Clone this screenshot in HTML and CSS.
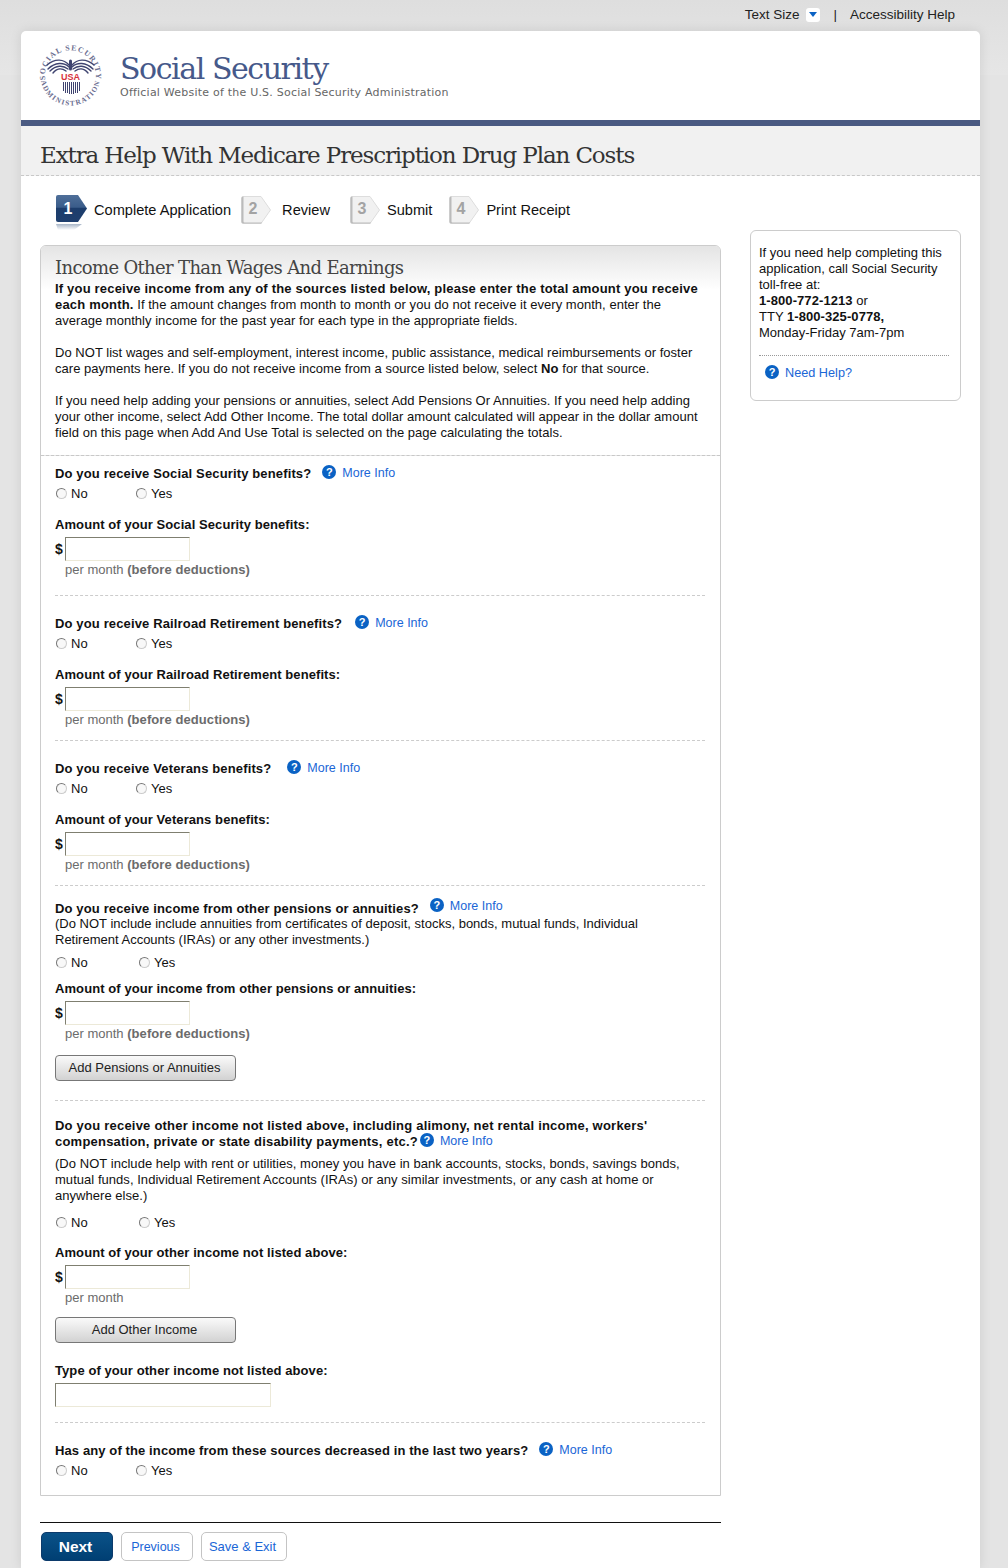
FILE: index.html
```html
<!DOCTYPE html>
<html lang="en">
<head>
  <meta charset="UTF-8" />
  <title>Extra Help With Medicare Prescription Drug Plan Costs</title>
  <link rel="stylesheet" href="styles.css">
</head>
<body>
  <div class="top-links">
    <span>Text Size</span>
    <span class="size-toggle"><svg width="8" height="5" viewBox="0 0 8 5"><path d="M0 0h8L4 5z" fill="#0a62c4"/></svg></span>
    <span class="divider">|</span>
    <span>Accessibility Help</span>
  </div>

  <div class="container">
    <div class="masthead">
      <svg class="seal" width="64" height="64" viewBox="0 0 64 64">
        <defs>
          <path id="arc-top" d="M6.500 37A25.500 25.500 0 1 1 56.500 37"/>
          <path id="arc-bottom" d="M1.600 34A30 30 0 0 0 61.400 34"/>
        </defs>
        <text class="seal-text"><textPath href="#arc-top" textLength="87" lengthAdjust="spacing" startOffset="1">SOCIAL SECURITY</textPath></text>
        <text class="seal-text seal-text-low"><textPath href="#arc-bottom" textLength="82" lengthAdjust="spacing" startOffset="3">ADMINISTRATION</textPath></text>
        <g fill="none" stroke="#3f4470" stroke-width="1.400" stroke-linecap="round">
          <path d="M30 21C25 15 16 14 8 21"/>
          <path d="M30 23C25 18 16 18 9 25"/>
          <path d="M29 25C24 21 17 21 11 27"/>
          <path d="M27 27C23 24 18 24 14 29"/>
          <path d="M33 21C38 15 47 14 55 21"/>
          <path d="M33 23C38 18 47 18 54 25"/>
          <path d="M34 25C39 21 46 21 52 27"/>
          <path d="M36 27C40 24 45 24 49 29"/>
          <path d="M31.500 17v8" stroke-width="3"/>
        </g>
        <text class="seal-usa" x="31.500" y="35.500" text-anchor="middle">USA</text>
        <path d="M24.500 38v9M26.500 38v11M28.500 38v11M30.500 38v12M32.500 38v12M34.500 38v12M36.500 38v11M38.500 38v11M40.500 38v9" stroke="#3f4470" stroke-width="1"/>
      </svg>
      <div class="brand">
        <div class="brand-name">Social Security</div>
        <div class="brand-sub">Official Website of the U.S. Social Security Administration</div>
      </div>
    </div>

    <div class="page-title"><h1>Extra Help With Medicare Prescription Drug Plan Costs</h1></div>

    <div class="columns">
      <div class="main-col">
        <div class="steps">
          <div class="step step-current">
            <span class="step-mark">
              <svg width="33" height="36" viewBox="0 0 33 36">
                <defs>
                  <linearGradient id="step-blue" x1="0" y1="0" x2="0" y2="1"><stop offset="0" stop-color="#4f6f99"/><stop offset=".45" stop-color="#3a5c8a"/><stop offset=".5" stop-color="#1c3d6c"/><stop offset="1" stop-color="#1f3f6e"/></linearGradient>
                  <linearGradient id="step-fade" x1="0" y1="0" x2="0" y2="1"><stop offset="0" stop-color="#a8b6c8"/><stop offset="1" stop-color="#fff"/></linearGradient>
                </defs>
                <path d="M0 29h26l-8 6H2z" fill="url(#step-fade)"/>
                <path d="M2 0h20l9 13.500L22 27H2q-2 0-2-2V2q0-2 2-2z" fill="url(#step-blue)"/>
                <text class="step-num step-num-on" x="12" y="19" text-anchor="middle">1</text>
              </svg>
            </span>
            <span class="step-label">Complete Application</span>
          </div>
          <div class="step step-review">
            <span class="step-mark step-mark-off"><svg width="31" height="28" viewBox="0 0 31 28"><path d="M2 .5h18L29.500 14 20 27.500H2q-1.500 0-1.500-1.500V2Q.5.5 2 .5z" fill="#f1f1f1" stroke="#ddd"/><path d="M2.500.5Q.5.5.5 2.500v23q0 2 2 2h18l.6-1H3.500q-1 0-1-1V.5z" fill="#bbb"/><text class="step-num" x="12" y="18" text-anchor="middle">2</text></svg></span>
            <span class="step-label">Review</span>
          </div>
          <div class="step step-submit">
            <span class="step-mark step-mark-off"><svg width="31" height="28" viewBox="0 0 31 28"><path d="M2 .5h18L29.500 14 20 27.500H2q-1.500 0-1.500-1.500V2Q.5.5 2 .5z" fill="#f1f1f1" stroke="#ddd"/><path d="M2.500.5Q.5.5.5 2.500v23q0 2 2 2h18l.6-1H3.500q-1 0-1-1V.5z" fill="#bbb"/><text class="step-num" x="12" y="18" text-anchor="middle">3</text></svg></span>
            <span class="step-label">Submit</span>
          </div>
          <div class="step step-print">
            <span class="step-mark step-mark-off"><svg width="31" height="28" viewBox="0 0 31 28"><path d="M2 .5h18L29.500 14 20 27.500H2q-1.500 0-1.500-1.500V2Q.5.5 2 .5z" fill="#f1f1f1" stroke="#ddd"/><path d="M2.500.5Q.5.5.5 2.500v23q0 2 2 2h18l.6-1H3.500q-1 0-1-1V.5z" fill="#bbb"/><text class="step-num" x="12" y="18" text-anchor="middle">4</text></svg></span>
            <span class="step-label">Print Receipt</span>
          </div>
        </div>

        <div class="panel">
          <div class="panel-head">
            <h2>Income Other Than Wages And Earnings</h2>
            <p><b>If you receive income from any of the sources listed below, please enter the total amount you receive each month.</b> If the amount changes from month to month or you do not receive it every month, enter the average monthly income for the past year for each type in the appropriate fields.</p>
            <p>Do NOT list wages and self-employment, interest income, public assistance, medical reimbursements or foster care payments here. If you do not receive income from a source listed below, select <b>No</b> for that source.</p>
            <p>If you need help adding your pensions or annuities, select Add Pensions Or Annuities. If you need help adding your other income, select Add Other Income. The total dollar amount calculated will appear in the dollar amount field on this page when Add And Use Total is selected on the page calculating the totals.</p>
          </div>

          <div class="panel-body">
            <div class="section sec-social">
              <div class="question"><b>Do you receive Social Security benefits?</b><a class="more-info"><span class="help-icon">?</span>More Info</a></div>
              <div class="radios"><label><input type="radio" name="q1">No</label><label><input type="radio" name="q1">Yes</label></div>
              <div class="amount-label">Amount of your Social Security benefits:</div>
              <div class="amount-row"><b>$</b><input type="text" class="money"></div>
              <div class="per-month">per month <b>(before deductions)</b></div>
            </div>

            <div class="section sec-railroad">
              <div class="question"><b>Do you receive Railroad Retirement benefits?</b><a class="more-info"><span class="help-icon">?</span>More Info</a></div>
              <div class="radios"><label><input type="radio" name="q2">No</label><label><input type="radio" name="q2">Yes</label></div>
              <div class="amount-label">Amount of your Railroad Retirement benefits:</div>
              <div class="amount-row"><b>$</b><input type="text" class="money"></div>
              <div class="per-month">per month <b>(before deductions)</b></div>
            </div>

            <div class="section sec-veterans">
              <div class="question"><b>Do you receive Veterans benefits?</b><a class="more-info"><span class="help-icon">?</span>More Info</a></div>
              <div class="radios"><label><input type="radio" name="q3">No</label><label><input type="radio" name="q3">Yes</label></div>
              <div class="amount-label">Amount of your Veterans benefits:</div>
              <div class="amount-row"><b>$</b><input type="text" class="money"></div>
              <div class="per-month">per month <b>(before deductions)</b></div>
            </div>

            <div class="section sec-pensions">
              <div class="question"><b>Do you receive income from other pensions or annuities?</b><a class="more-info"><span class="help-icon">?</span>More Info</a></div>
              <div class="note">(Do NOT include include annuities from certificates of deposit, stocks, bonds, mutual funds, Individual Retirement Accounts (IRAs) or any other investments.)</div>
              <div class="radios radios-wide"><label><input type="radio" name="q4">No</label><label><input type="radio" name="q4">Yes</label></div>
              <div class="amount-label">Amount of your income from other pensions or annuities:</div>
              <div class="amount-row"><b>$</b><input type="text" class="money"></div>
              <div class="per-month">per month <b>(before deductions)</b></div>
              <button class="add-btn" type="button">Add Pensions or Annuities</button>
            </div>

            <div class="section sec-other">
              <div class="question"><b>Do you receive other income not listed above, including alimony, net rental income, workers' compensation, private or state disability payments, etc.?</b><a class="more-info"><span class="help-icon">?</span>More Info</a></div>
              <div class="note">(Do NOT include help with rent or utilities, money you have in bank accounts, stocks, bonds, savings bonds, mutual funds, Individual Retirement Accounts (IRAs) or any similar investments, or any cash at home or anywhere else.)</div>
              <div class="radios radios-wide"><label><input type="radio" name="q5">No</label><label><input type="radio" name="q5">Yes</label></div>
              <div class="amount-label">Amount of your other income not listed above:</div>
              <div class="amount-row"><b>$</b><input type="text" class="money"></div>
              <div class="per-month">per month</div>
              <button class="add-btn" type="button">Add Other Income</button>
              <div class="amount-label type-label">Type of your other income not listed above:</div>
              <input type="text" class="type-input">
            </div>

            <div class="section sec-decreased">
              <div class="question"><b>Has any of the income from these sources decreased in the last two years?</b><a class="more-info"><span class="help-icon">?</span>More Info</a></div>
              <div class="radios"><label><input type="radio" name="q6">No</label><label><input type="radio" name="q6">Yes</label></div>
            </div>
          </div>
        </div>

        <div class="actions">
          <button class="btn-next" type="button">Next</button>
          <button class="btn-plain" type="button">Previous</button>
          <button class="btn-plain btn-save" type="button">Save &amp; Exit</button>
        </div>
      </div>

      <div class="help-box">
        <p>If you need help completing this application, call Social Security toll-free at:<br><b>1-800-772-1213</b> or<br>TTY <b>1-800-325-0778,</b><br>Monday-Friday 7am-7pm</p>
        <a class="need-help"><span class="help-icon">?</span>Need Help?</a>
      </div>
    </div>
  </div>
</body>
</html>
```

FILE: styles.css
```css
body {
  margin: 0;
  font-family: "Liberation Sans", Arial, sans-serif;
  font-size: 13px;
  line-height: 16px;
  color: #111;
  background:
    linear-gradient(#dedede, #e6e6e6) top left / 100% 75px no-repeat,
    #e4e4e4;
}

b {
  letter-spacing: 0.08px;
}

.top-links {
  display: flex;
  justify-content: flex-end;
  align-items: center;
  height: 31px;
  padding: 0 53px 2px 0;
  box-sizing: border-box;
  font-size: 13.500px;
  color: #222;
}

.size-toggle {
  display: flex;
  align-items: center;
  justify-content: center;
  width: 14px;
  height: 14px;
  margin-left: 7px;
  background: #fff;
  border-radius: 3px;
}

.divider {
  margin: 0 13px 0 13px;
}

.container {
  width: 959px;
  margin-left: 21px;
  background: #fff;
  border-radius: 5px 5px 0 0;
  box-shadow: 0 0 12px rgba(0, 0, 0, 0.1);
}

.masthead {
  display: flex;
  height: 89px;
  padding-left: 18px;
  box-sizing: border-box;
}

.seal {
  margin-top: 13px;
}

.seal-text {
  font-family: "Liberation Serif", serif;
  font-size: 7.800px;
  font-weight: bold;
  fill: #6a6d90;
}

.seal-text-low {
  font-size: 7.200px;
}

.seal-usa {
  font-family: "Liberation Sans", Arial, sans-serif;
  font-size: 9px;
  font-weight: bold;
  fill: #d8323c;
}

.brand {
  margin-left: 17px;
  padding-top: 20px;
}

.brand-name {
  font-family: "DejaVu Serif", serif;
  font-size: 30px;
  line-height: 36px;
  color: #46598a;
  letter-spacing: -1.450px;
}

.brand-sub {
  font-family: "DejaVu Sans", sans-serif;
  font-size: 11px;
  line-height: 12px;
  letter-spacing: 0.22px;
  color: #666;
}

.page-title {
  height: 49px;
  background: #f1f1f1;
  border-top: 6px solid #4a5a82;
  border-bottom: 1px dashed #c8c8c8;
}

h1 {
  margin: 0;
  padding: 14px 0 0 19px;
  font-family: "DejaVu Serif", serif;
  font-weight: normal;
  font-size: 23px;
  line-height: 30px;
  letter-spacing: -1.120px;
  color: #333;
}

.columns {
  display: flex;
  padding-left: 19px;
}

.main-col {
  width: 681px;
}

.steps {
  display: flex;
  height: 69px;
  padding: 19px 0 0 16px;
  box-sizing: border-box;
  font-size: 14.600px;
}

.step {
  display: flex;
  align-items: flex-start;
}

.step-mark {
  display: block;
  height: 28px;
}

.step-mark-off {
  margin-top: 1px;
}

.step-label {
  line-height: 30px;
}

.step-current .step-label {
  margin-left: 5px;
}

.step-review {
  margin-left: 10px;
}

.step-review .step-label {
  margin-left: 10px;
}

.step-submit {
  margin-left: 20px;
}

.step-submit .step-label {
  margin-left: 6px;
}

.step-print {
  margin-left: 17px;
}

.step-print .step-label {
  margin-left: 6px;
}

.step-num {
  font-family: "Liberation Sans", Arial, sans-serif;
  font-size: 16px;
  font-weight: bold;
  fill: #a3a3a3;
}

.step-num-on {
  fill: #fff;
}

.panel {
  border: 1px solid #ccc;
  border-radius: 6px 6px 0 0;
}

.panel-head {
  padding: 10px 14px 14px;
  border-bottom: 1px dashed #c8c8c8;
  background: linear-gradient(#e4e4e4, #fff 44px);
  border-radius: 5px 5px 0 0;
}

h2 {
  margin: 0 0 1px;
  font-family: "DejaVu Serif", serif;
  font-weight: normal;
  font-size: 18px;
  line-height: 24px;
  letter-spacing: -0.660px;
  color: #444;
}

.panel-head p {
  margin: 0 0 16px;
  letter-spacing: 0.03px;
}

.panel-head b {
  letter-spacing: 0.19px;
}

.panel-head p:last-child {
  margin-bottom: 0;
}

.panel-body {
  padding: 0 15px 0 14px;
}

.section {
  border-bottom: 1px dashed #ccc;
}

.section:last-child {
  border-bottom: 0;
}

.sec-social {
  padding: 10px 0 17px;
}

.sec-railroad,
.sec-veterans {
  padding: 20px 0 12px;
}

.sec-pensions {
  padding: 15px 0 19px;
}

.sec-other {
  padding: 17px 0 15px;
}

.sec-decreased {
  padding: 20px 0 17px;
}

.question b {
  letter-spacing: 0.14px;
}

.sec-other .question b {
  letter-spacing: 0.22px;
}

.sec-decreased .question b {
  letter-spacing: 0.11px;
}

.more-info {
  margin-left: 11px;
  font-size: 12.500px;
  color: #1a66d6;
  position: relative;
  top: -1px;
}

.sec-railroad .more-info {
  margin-left: 13px;
}

.sec-veterans .more-info {
  margin-left: 16px;
}

.sec-pensions .more-info {
  top: -3px;
}

.sec-other .more-info {
  margin-left: 2px;
}

.help-icon {
  display: inline-block;
  width: 14px;
  height: 14px;
  margin-right: 6px;
  border-radius: 50%;
  background: #0a62c4;
  color: #fff;
  font-size: 11px;
  font-weight: bold;
  line-height: 14px;
  text-align: center;
  vertical-align: 1px;
}

.radios {
  display: flex;
  margin-top: 3px;
  height: 16px;
}

.radios label {
  display: flex;
  align-items: center;
  width: 80px;
  height: 18px;
}

.radios-wide label {
  width: 83px;
}

.radios input {
  appearance: none;
  width: 11px;
  height: 11px;
  margin: 0 4px 2px 1px;
  border: 1px solid #777;
  border-right-color: #ccc;
  border-bottom-color: #ccc;
  border-radius: 50%;
  background: #f8f8f8;
  box-sizing: border-box;
}

.amount-label {
  margin-top: 16px;
  font-weight: bold;
  letter-spacing: 0.08px;
}

.amount-row {
  display: flex;
  align-items: center;
  height: 24px;
  margin-top: 4px;
}

.amount-row b {
  width: 10px;
  font-size: 14px;
}

.money,
.type-input {
  height: 24px;
  margin: 0;
  padding: 0;
  box-sizing: border-box;
  background: #fff;
  border: 1px solid #ece9d8;
  border-top: 1px solid #7f7f70;
  border-left: 1px solid #7f7f70;
}

.money {
  width: 125px;
}

.type-input {
  display: block;
  width: 216px;
  margin-top: 4px;
}

.per-month {
  margin-left: 10px;
  padding-top: 1px;
  color: #6b6b6b;
}

.add-btn {
  display: block;
  width: 181px;
  height: 26px;
  margin-top: 13px;
  padding: 0 2px 0 0;
  font: 13px/16px "Liberation Sans", Arial, sans-serif;
  color: #222;
  border: 1px solid #777;
  border-radius: 4px;
  background: linear-gradient(#fafafa, #d2d2d2);
}

.sec-other .add-btn {
  margin-top: 11px;
}

.note {
  margin-top: -1px;
}

.sec-pensions .radios {
  margin-top: 6px;
}

.sec-pensions .amount-label {
  margin-top: 11px;
}

.sec-other .note {
  margin-top: 6px;
  letter-spacing: 0.04px;
}

.sec-other .radios {
  margin-top: 10px;
}

.sec-other .amount-label {
  margin-top: 15px;
}

.sec-other .type-label {
  margin-top: 20px;
}

.actions {
  display: flex;
  gap: 8px;
  height: 46px;
  margin-top: 26px;
  padding: 9px 0 0 1px;
  border-top: 1px solid #111;
  box-sizing: border-box;
}

.actions button {
  height: 29px;
  padding: 0 3px 0 0;
  font: 12.500px/16px "Liberation Sans", Arial, sans-serif;
  border-radius: 5px;
}

.actions .btn-next {
  width: 72px;
  color: #fff;
  font-size: 15.500px;
  font-weight: bold;
  border: 1px solid #0c3a6b;
  background: linear-gradient(#0a5288, #003f73);
}

.btn-plain {
  width: 72px;
  color: #1a66d6;
  background: #fff;
  border: 1px solid #c4c4c4;
}

.actions .btn-save {
  width: 86px;
  font-size: 13px;
}

.help-box {
  width: 211px;
  height: 171px;
  margin: 54px 0 0 29px;
  padding: 14px 11px 0 8px;
  box-sizing: border-box;
  border: 1px solid #ccc;
  border-radius: 6px;
}

.help-box p {
  margin: 0 0 9px;
  padding-bottom: 14px;
  border-bottom: 1px dotted #999;
}

.need-help {
  display: block;
  margin-left: 6px;
  font-size: 12.700px;
  color: #1a66d6;
}
```
